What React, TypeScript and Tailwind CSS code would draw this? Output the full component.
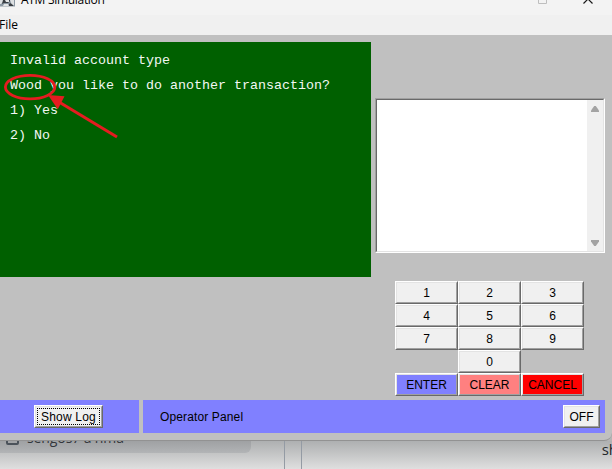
import type { ReactNode } from "react";

const raised =
  "border border-t-white border-l-white border-r-[#696969] border-b-[#696969]";
const raisedInner =
  "flex h-full w-full items-center justify-center border border-t-[#e3e3e3] border-l-[#e3e3e3] border-r-[#a0a0a0] border-b-[#a0a0a0]";

function Button({
  children,
  className,
  color = "bg-[#f0f0f0]",
}: {
  children: ReactNode;
  className: string;
  color?: string;
}) {
  return (
    <button className={`${raised} ${className}`}>
      <span className={`${raisedInner} ${color}`}>{children}</span>
    </button>
  );
}

const key = "h-[23px] w-[63px]";

function Keypad() {
  return (
    <div className="ml-5 mt-7 grid w-[189px] grid-cols-3">
      {["1", "2", "3", "4", "5", "6", "7", "8", "9"].map((n) => (
        <Button key={n} className={key}>{n}</Button>
      ))}
      <span />
      <Button className={key}>0</Button>
      <span />
      <Button className={key} color="bg-[#8080ff]">ENTER</Button>
      <Button className={key} color="bg-[#ff8080]">CLEAR</Button>
      <Button className={key} color="bg-[#ff0000]">CANCEL</Button>
    </div>
  );
}

function Receipt() {
  return (
    <div className="mt-14 h-[155px] w-[230px] border border-t-[#a0a0a0] border-l-[#a0a0a0] border-r-white border-b-white">
      <div className="flex h-full border border-t-[#696969] border-l-[#696969] border-r-[#e3e3e3] border-b-[#e3e3e3] bg-white">
        <div className="flex-1" />
        <div className="flex w-4 flex-col items-center justify-between bg-[#f0f0f0] pb-[5px] pt-[6px]">
          <svg width="8" height="6" viewBox="0 0 8 6" fill="#a3a3a3"><path d="M3.2 0h1.6L8 4.5V6H0V4.5z" /></svg>
          <svg width="8" height="6" viewBox="0 0 8 6" fill="#a3a3a3"><path d="M0 0h8v1.5L4.8 6H3.2L0 1.5z" /></svg>
        </div>
      </div>
    </div>
  );
}

function Display() {
  return (
    <div className="relative h-[235px] w-[371px] whitespace-pre bg-[#006000] pl-[10px] pt-[6px] font-['Liberation_Mono',monospace] text-[13.333px] leading-[25px] text-[#f4f8f4]">
      <p>Invalid account type</p>
      <p>Wood you like to do another transaction?</p>
      <p>1) Yes</p>
      <p>2) No</p>
      <svg className="absolute left-0 top-0" width="140" height="110" viewBox="0 42 140 110" fill="none" stroke="#e51c20">
        <ellipse cx="30.1" cy="87.1" rx="24.7" ry="11.8" strokeWidth="2.8" />
        <path d="M117 137L59 102" strokeWidth="3" />
        <path d="M48 95L64.5 96.2L57.8 109.3Z" fill="#e51c20" stroke="none" />
      </svg>
    </div>
  );
}

function TitleBar() {
  return (
    <div className="flex h-[15px] items-start overflow-hidden bg-[#f3f3f3]">
      <svg width="15" height="7" viewBox="0 0 15 7" className="shrink-0">
        <path d="M0 0h15v6.5H0z" fill="#8c98a3" />
        <path d="M0 0h3v2L1 4H0zM10 0h4v5h-2z" fill="#dcdfe1" />
        <path d="M3 0h7v1L8 3H4L2 4zM10 3l3 2v1H8z" fill="#393d42" />
        <path d="M5 0h4v2H6zM4 4h4l1 2H3z" fill="#e2e4e5" />
      </svg>
      <span className="-mt-[7px] ml-[6px] font-['Open_Sans',sans-serif] text-[12px] leading-[14px] tracking-[-0.3px] text-black">ATM Simulation</span>
      <svg className="ml-auto mr-[17px]" width="58" height="7" viewBox="0 0 58 7" fill="none">
        <path d="M1.5-4.5h8v8h-8z" stroke="#bebebe" />
        <path d="M46.5-5.5l9 9m0-9l-9 9" stroke="#191919" strokeWidth="1.2" />
      </svg>
    </div>
  );
}

export default function App() {
  return (
    <div className="grid h-[469px] w-[612px] grid-rows-[441px_28px] overflow-hidden bg-[#b4b4b4] font-['Liberation_Sans',Arial,sans-serif] text-[12px] leading-[14px] text-black">
      <div className="flex flex-col overflow-hidden rounded-br-[8px] border-b border-[#929292] bg-[#c0c0c0]">
        <TitleBar />
        <div className="h-5 bg-[#f0f0f0] pt-[3px]">
          <span className="-ml-[1px] font-['Open_Sans',sans-serif] text-[12px]">File</span>
        </div>
        <div className="flex h-[365px] items-start gap-1 pt-[7px]">
          <Display />
          <div>
            <Receipt />
            <Keypad />
          </div>
        </div>
        <div className="flex h-[33px] gap-1">
          <div className="flex w-[139px] items-start bg-[#8080ff] pl-[34px] pt-[5px]">
            <Button className="h-[23px] w-[69px]">
              <span className="flex h-[17px] w-[63px] items-center justify-center whitespace-nowrap border border-dotted border-black tracking-[0.2px]">Show Log</span>
            </Button>
          </div>
          <div className="flex w-[462px] items-start justify-between bg-[#8080ff] pl-[17px] pr-[5px] pt-[5px]">
            <span className="leading-[24px] tracking-[0.13px]">Operator Panel</span>
            <Button className="h-[23px] w-[37px]">OFF</Button>
          </div>
        </div>
      </div>

      <div className="flex overflow-hidden bg-linear-to-b from-[#aeb0b1] to-[#dfdfdf]">
        <div className="h-3 w-[251px] overflow-hidden rounded-br-[6px] bg-linear-to-b from-[#9fa1a3] to-[#b2b4b6]">
          <div className="-mt-[12px] flex items-start">
            <span className="ml-[6px] mt-[4px] h-[12px] w-[13px] rounded-[2px] border-2 border-[#4b525a]" />
            <span className="ml-[8px] whitespace-pre font-['Open_Sans',sans-serif] text-[14px] leading-[18px] tracking-[-0.1px] text-[#32363b]">sengos7 a hma</span>
          </div>
        </div>
        <div className="ml-[33px] w-[18px] border-x border-[#949ba4]" />
        <div className="flex flex-1 justify-end overflow-hidden">
          <span className="-mr-[6px] -mt-px font-['Open_Sans',sans-serif] text-[15px] leading-[18px] text-[#24272b]">sh</span>
        </div>
      </div>
    </div>
  );
}
